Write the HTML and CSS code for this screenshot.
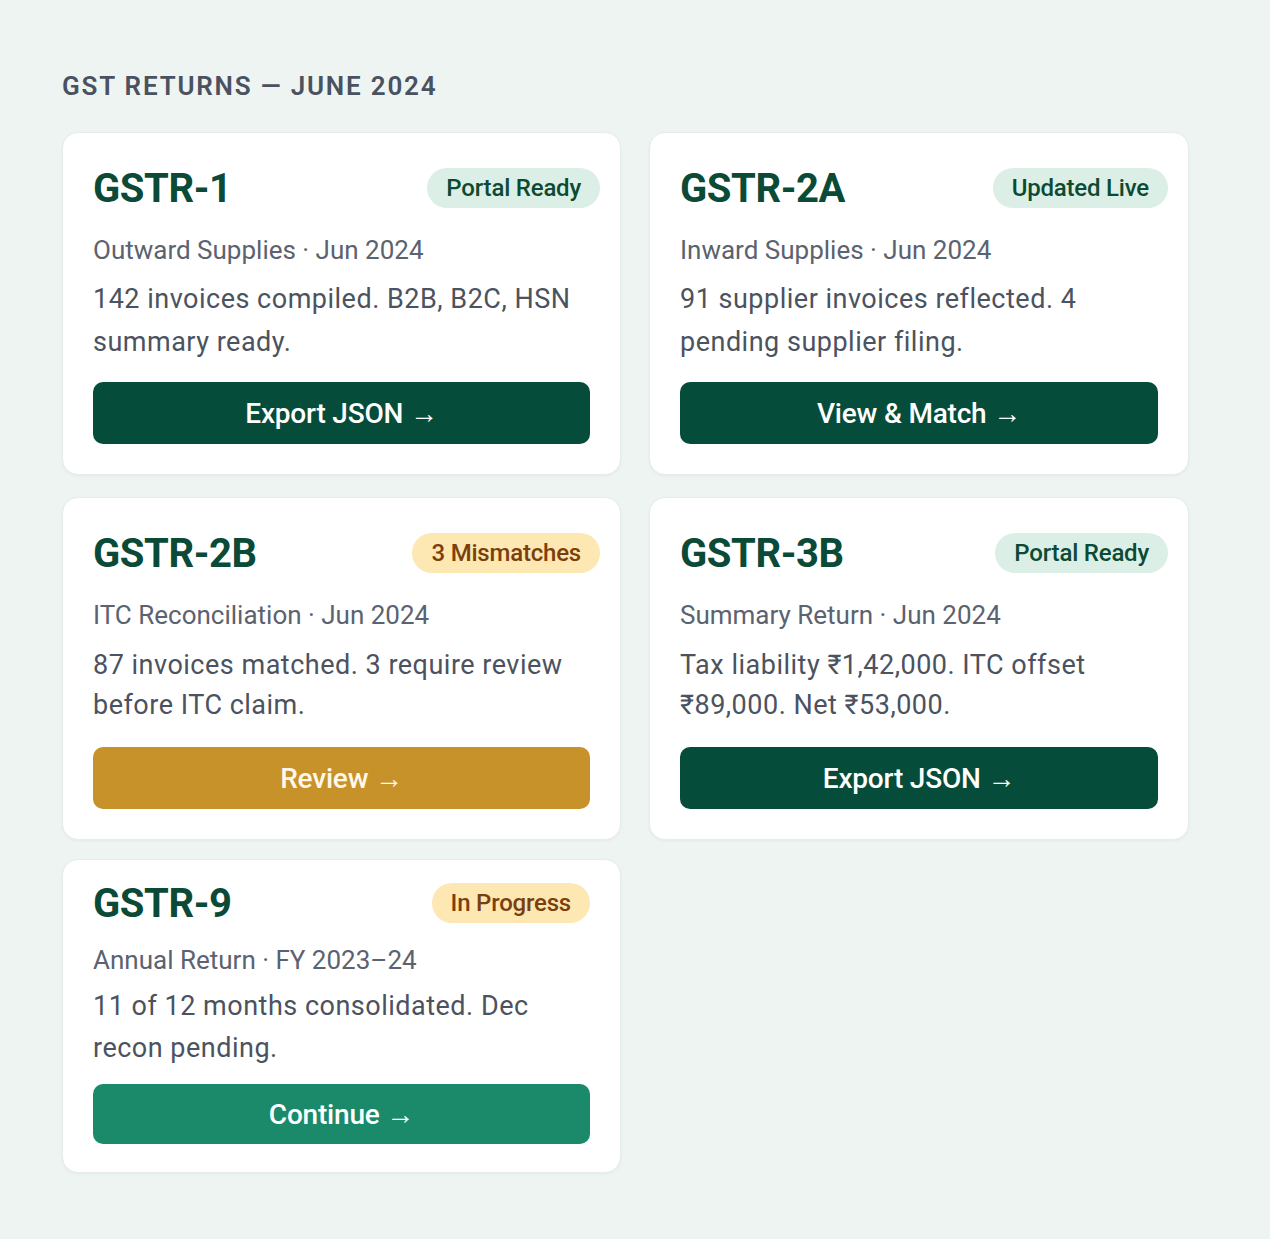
FILE: index.html
```html
<!DOCTYPE html>
<html lang="en">
<head>
<meta charset="utf-8">
<title>GST Returns — June 2024</title>
<link rel="stylesheet" href="styles.css">
</head>
<body>
<main class="page">
  <h1 class="page-title">GST RETURNS — JUNE 2024</h1>
  <section class="grid">
    <article class="card">
      <header class="card-head">
        <h2 class="card-title">GSTR-1</h2>
        <span class="badge badge-green">Portal Ready</span>
      </header>
      <p class="card-sub">Outward Supplies · Jun 2024</p>
      <p class="card-desc">142 invoices compiled. B2B, B2C, HSN summary ready.</p>
      <button class="btn btn-dark">Export JSON →</button>
    </article>
    <article class="card">
      <header class="card-head">
        <h2 class="card-title">GSTR-2A</h2>
        <span class="badge badge-green">Updated Live</span>
      </header>
      <p class="card-sub">Inward Supplies · Jun 2024</p>
      <p class="card-desc">91 supplier invoices reflected. 4 pending supplier filing.</p>
      <button class="btn btn-dark">View &amp; Match →</button>
    </article>
    <article class="card card-mid">
      <header class="card-head">
        <h2 class="card-title">GSTR-2B</h2>
        <span class="badge badge-amber">3 Mismatches</span>
      </header>
      <p class="card-sub">ITC Reconciliation · Jun 2024</p>
      <p class="card-desc">87 invoices matched. 3 require review before ITC claim.</p>
      <button class="btn btn-gold">Review →</button>
    </article>
    <article class="card card-mid">
      <header class="card-head">
        <h2 class="card-title">GSTR-3B</h2>
        <span class="badge badge-green">Portal Ready</span>
      </header>
      <p class="card-sub">Summary Return · Jun 2024</p>
      <p class="card-desc">Tax liability ₹1,42,000. ITC offset ₹89,000. Net ₹53,000.</p>
      <button class="btn btn-dark">Export JSON →</button>
    </article>
    <article class="card card-compact">
      <header class="card-head">
        <h2 class="card-title">GSTR-9</h2>
        <span class="badge badge-amber">In Progress</span>
      </header>
      <p class="card-sub">Annual Return · FY 2023–24</p>
      <p class="card-desc">11 of 12 months consolidated. Dec recon pending.</p>
      <button class="btn btn-teal">Continue →</button>
    </article>
  </section>
</main>
</body>
</html>
```

FILE: styles.css
```css
* { box-sizing: border-box; }

html, body {
  margin: 0;
  padding: 0;
  background: #eef4f1;
}

body {
  font-family: Roboto, "Liberation Sans", sans-serif;
  color: #4b5260;
}

.page {
  padding: 68px 0 60px 62px;
}

.page-title {
  margin: 0 0 28px 0;
  font-size: 26px;
  line-height: 36px;
  font-weight: 600;
  letter-spacing: 1.8px;
  color: #4a5160;
}

.grid {
  display: grid;
  grid-template-columns: 559px 540px;
  column-gap: 28px;
  row-gap: 22px;
  align-items: start;
}

.card {
  background: #ffffff;
  border-radius: 16px;
  padding: 32px 30px 30px 30px;
  box-shadow: 0 1px 3px rgba(20, 60, 45, 0.05);
  border: 1px solid #e6eeea;
}

.card-compact {
  margin-top: -3px;
}

.card-head {
  display: flex;
  align-items: center;
  justify-content: space-between;
  height: 46px;
  margin-right: -10px;
}

.card-title {
  margin: 0;
  font-size: 40px;
  font-weight: 700;
  color: #0a4a37;
  letter-spacing: -0.4px;
}

.badge {
  display: inline-flex;
  align-items: center;
  height: 40px;
  padding: 0 19px;
  border-radius: 20px;
  font-size: 24px;
  font-weight: 500;
  letter-spacing: -0.2px;
}

.badge-green {
  background: #dcefe6;
  color: #0d4a33;
}

.badge-amber {
  background: #fde7b3;
  color: #7b3f0c;
}

.card-sub {
  margin: 21px 0 0 0;
  font-size: 26px;
  line-height: 36px;
  color: #5b6270;
}

.card-desc {
  margin: 10px 0 0 0;
  font-size: 27px;
  line-height: 43px;
  letter-spacing: 0.5px;
  color: #4b5260;
}

.btn {
  display: block;
  width: 100%;
  height: 62px;
  margin-top: 18px;
  border: none;
  border-radius: 10px;
  font-family: Roboto, "Liberation Sans", sans-serif;
  font-size: 28px;
  font-weight: 500;
  letter-spacing: -0.2px;
  color: #ffffff;
}

.card-mid .card-desc {
  line-height: 40px;
  margin-top: 12px;
}

.card-mid .btn {
  margin-top: 22px;
}

.card-compact {
  padding: 20px 30px 28px 30px;
}

.card-compact .card-head {
  margin-right: 0;
}

.card-compact .card-sub {
  margin-top: 16px;
}

.card-compact .card-desc {
  margin-top: 7px;
  line-height: 42px;
}

.card-compact .btn {
  height: 60px;
  margin-top: 15px;
}

.btn-dark { background: #064c3a; }
.btn-gold { background: #c8922a; color: #fff8ea; }
.btn-teal { background: #1a8a6a; }
```
